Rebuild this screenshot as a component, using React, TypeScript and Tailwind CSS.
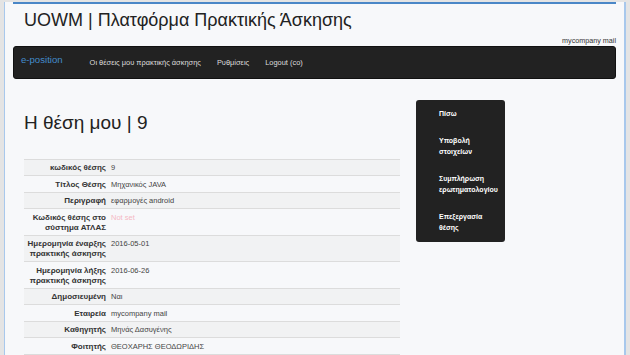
const ROWS: { label: string[]; value: string; notSet?: boolean }[] = [
  { label: ["κωδικός θέσης"], value: "9" },
  { label: ["Τίτλος Θέσης"], value: "Μηχανικός JAVA" },
  { label: ["Περιγραφή"], value: "εφαρμογές android" },
  { label: ["Κωδικός θέσης στο", "σύστημα ΑΤΛΑΣ"], value: "Not set", notSet: true },
  { label: ["Ημερομηνία έναρξης", "πρακτικής άσκησης"], value: "2016-05-01" },
  { label: ["Ημερομηνία λήξης", "πρακτικής άσκησης"], value: "2016-06-26" },
  { label: ["Δημοσιευμένη"], value: "Ναι" },
  { label: ["Εταιρεία"], value: "mycompany mail" },
  { label: ["Καθηγητής"], value: "Μηνάς Δασυγένης" },
  { label: ["Φοιτητής"], value: "ΘΕΟΧΑΡΗΣ ΘΕΟΔΩΡΙΔΗΣ" },
];

const MENU = [["Πίσω"], ["Υποβολή", "στοιχείων"], ["Συμπλήρωση", "ερωτηματολογίου"], ["Επεξεργασία", "θέσης"]];

export default function App() {
  return (
    <div
      className="h-[355px] overflow-hidden bg-[#e4e4e4] px-[4px] text-[#333]"
      style={{ fontFamily: '"Liberation Sans Narrow", "Liberation Sans", Arial, sans-serif' }}
    >
      <div className="h-full bg-[#f7f8fa] border-l border-r-2 border-[#a8c8ec]">
        <div className="mx-[8px]">
          <div className="mt-[2px] h-[2px] bg-[#4a87c7]" />

          {/* header */}
          <h1 className="pl-[11px] pt-[5px] text-[18px] leading-[22px] font-normal text-[#222]">
            UOWM | Πλατφόρμα Πρακτικής Άσκησης
          </h1>
          <div className="mt-[5px] text-right text-[7.2px] leading-[9px] text-[#333]">mycompany mail</div>

          {/* navbar */}
          <nav className="mt-[1px] flex h-[33px] items-center rounded-[3px] border border-[#111] bg-[#222] px-[7px]">
            <span className="-mt-[4px] text-[9.6px] text-[#428bca]">e-position</span>
            <div className="ml-[27px] flex gap-[16px] text-[7.45px] text-[#ddd]">
              <span>Οι θέσεις μου πρακτικής άσκησης</span>
              <span>Ρυθμίσεις</span>
              <span>Logout (co)</span>
            </div>
          </nav>

          {/* content */}
          <div className="mt-[21px] flex gap-[16px] pl-[11px]">
            <div className="w-[376px]">
              <h2 className="pt-[11px] text-[19px] leading-[24px] font-light text-[#222]">Η θέση μου | 9</h2>
              <div className="mt-[23.5px] border-b border-[#dcdcdc]">
                {ROWS.map((r, i) => (
                  <div
                    key={i}
                    className={`flex border-t border-[#dcdcdc] pt-[3.5px] pb-[2px] text-[7.5px] leading-[10px] ${
                      i % 2 === 0 ? "bg-[#f1f2f3]" : ""
                    }`}
                  >
                    <div className="w-[85px] shrink-0 whitespace-nowrap pr-[3px] text-right text-[8px] font-bold text-[#333]">
                      {r.label.map((l, j) => (
                        <div key={j}>{l}</div>
                      ))}
                    </div>
                    <div className={`pl-[2px] ${r.notSet ? "text-[#f5b8c4]" : "text-[#444]"}`}>{r.value}</div>
                  </div>
                ))}
              </div>
            </div>

            {/* side menu */}
            <div className="w-[89px] self-start rounded-[3px] bg-[#222] pl-[23px] pr-[2px]">
              {MENU.map((m, i) => (
                <div key={i} className="py-[8.5px] text-[7px] leading-[10.5px] font-bold text-white">
                  {m.map((l, j) => (
                    <div key={j}>{l}</div>
                  ))}
                </div>
              ))}
            </div>
          </div>
        </div>
      </div>
    </div>
  );
}
